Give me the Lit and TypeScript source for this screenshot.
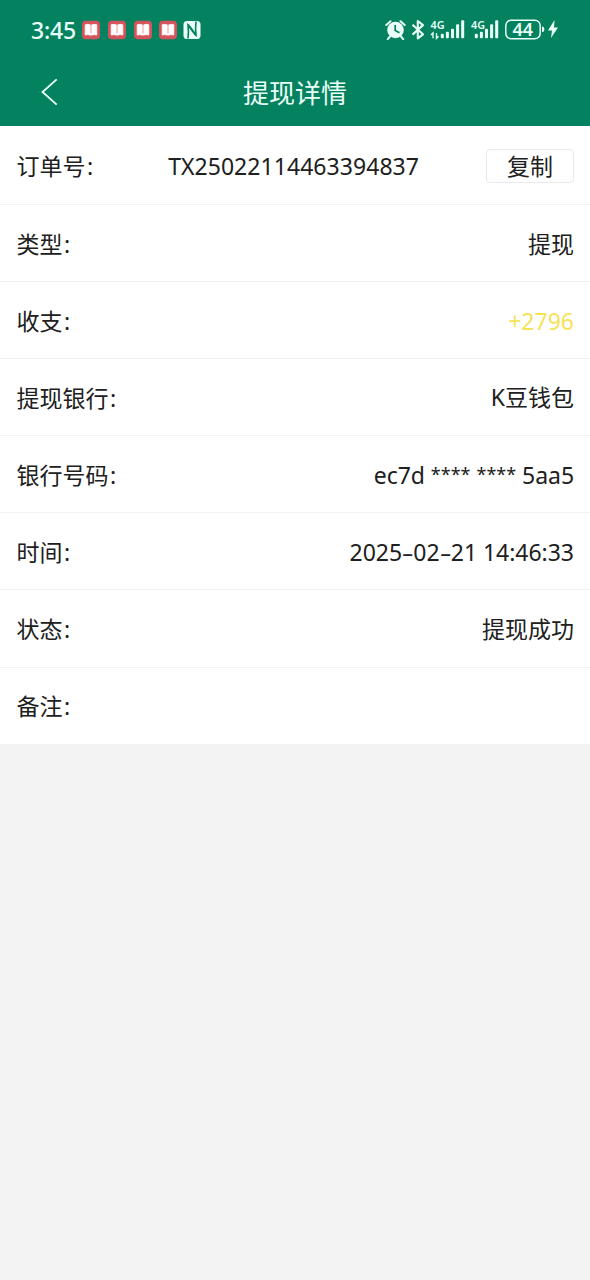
import { LitElement, html, svg, css } from "lit";
import { customElement, property } from "lit/decorators.js";

const book = html`<svg class="book" width="20" height="20" viewBox="0 0 20 20">
  <rect x="1" y="0.8" width="18" height="18.4" rx="4" fill="#d5545c" />
  <path d="M4.2 4.8Q7 3.7 9.6 5V15.2Q7 14.1 4.2 15ZM10.4 5Q13 3.7 15.8 4.8V15Q13 14.1 10.4 15.2Z" fill="#fff" stroke="#fff" stroke-width=".8" stroke-linejoin="round" />
  <path d="M10 5V13" stroke="#eda0a5" stroke-width=".8" />
</svg>`;

@customElement("status-bar")
class StatusBar extends LitElement {
  static styles = css`
    :host { display: flex; height: 58px; align-items: center; color: #e9fff7; padding: 1px 31px 0; box-sizing: border-box; font-family: "Noto Sans", sans-serif; }
    svg { display: block; flex: none; }
    .time { width: 50.4px; font-size: 23px; font-weight: 500; letter-spacing: -0.2px; line-height: 30px; white-space: nowrap; }
    .books { display: flex; gap: 5.7px; }
    .nfc { margin-left: 4.5px; }
    .right { margin-left: auto; }
    .net { font: 600 11px "Noto Sans", sans-serif; }
    .level { font: 600 17px "Noto Sans", sans-serif; }
  `;

  private bars(x: number) {
    return [0, 1, 2, 3, 4].map((i) => {
      const h = [4.5, 6.5, 9.5, 14, 18][i];
      return svg`<rect x=${x + i * 5.1} y=${38.3 - h} width="3" height=${h} rx="1" />`;
    });
  }

  render() {
    return html`
      <div class="time">3:45</div>
      <div class="books">${book}${book}${book}${book}</div>
      <svg class="nfc" width="18" height="20" viewBox="0 0 18 20">
        <rect x="0.5" y="1" width="17" height="18" rx="3.5" fill="#e9fff7" />
        <path d="M5 18.5Q5.8 12 5 5.2L12.8 15.4M13 1.5Q12.2 8 13 14.8L5.2 4.6" fill="none" stroke="#048260" stroke-width="1.6" />
      </svg>
      <svg class="right" width="174" height="40" viewBox="385 10 174 40" fill="#e9fff7">
        <g transform="translate(0 -0.5)">
          <circle cx="395.5" cy="30.5" r="8.3" />
          <path d="M386.3 25.5L390.5 21.7M404.7 25.5L400.5 21.7M390 37L387.8 39.6M401 37L403.2 39.6" stroke="#e9fff7" stroke-width="2" stroke-linecap="round" />
          <path d="M395.2 25.5V31L399.5 33.2" stroke="#048260" stroke-width="1.7" fill="none" />
        </g>
        <path d="M412.5 24.8L423 34.3L417.8 38.3V21L423 25.1L412.5 34.6" stroke="#e9fff7" stroke-width="2.1" fill="none" stroke-linejoin="round" />
        <text class="net" x="430.5" y="28.5" textLength="14" lengthAdjust="spacingAndGlyphs">4G</text>
        <path d="M431 35L433 33V38.3M438.5 36.3L436.5 38.3V33" stroke="#e9fff7" stroke-width="1.4" fill="none" />
        <g>${this.bars(440.8)}</g>
        <text class="net" x="471" y="28.5" textLength="14" lengthAdjust="spacingAndGlyphs">4G</text>
        <g>${this.bars(474.8)}</g>
        <rect x="505.8" y="20.2" width="34.4" height="18.6" rx="5.5" fill="none" stroke="#e9fff7" stroke-width="1.5" />
        <text class="level" x="512.5" y="35.9" textLength="20.5" lengthAdjust="spacingAndGlyphs">44</text>
        <path d="M542 26.5Q544.3 26.5 544.3 29.2Q544.3 32 542 32Z" />
        <path d="M554.5 20L548 30.5H552L551 38L558 27.5H554Z" />
      </svg>
    `;
  }
}

@customElement("detail-row")
class DetailRow extends LitElement {
  @property() label = "";
  @property() value = "";
  @property() tone = "";
  @property({ type: Boolean }) copy = false;

  static styles = css`
    :host { display: flex; align-items: center; justify-content: space-between; height: 77.1px; padding: 0 16px 0 16.5px; box-sizing: border-box; border-bottom: 1.5px solid #f2f2f2; background: #fff; color: #202020; font: 23px/34px "Noto Sans", "Noto Sans CJK SC", sans-serif; white-space: nowrap; }
    :host([copy]) { height: 79px; padding-top: 2px; }
    :host([last]) { border-bottom: 0; height: 76px; }
    .label, .cjk { font-family: "Noto Sans CJK SC", sans-serif; }
    .cjk { padding-bottom: 1px; }
    :host([copy]) .label { padding-bottom: 2px; }
    .colon { font-family: "Noto Sans", sans-serif; margin-left: 1.5px; }
    .order { letter-spacing: 0.05px; padding-left: 8px; }
    .account { letter-spacing: -0.05px; }
    .account, .date, .amount { padding-top: 1px; }
    .star { display: inline-block; font-size: 18px; letter-spacing: 0; line-height: 1; transform: translateY(-3px); }
    .dash { display: inline-block; width: 11.2px; text-align: center; transform: scaleX(1.6); letter-spacing: 0; }
    .date { letter-spacing: -0.03px; }
    .amount { color: #f6e258; }
    .button { width: 88px; height: 34px; box-sizing: border-box; border: 1px solid #e9e9e9; border-radius: 4px; background: #fff; color: #202020; padding: 0 0 2px; font: 23px/30px "Noto Sans CJK SC", sans-serif; }
  `;

  private parts() {
    return this.value.split(/(\*+|-)/).map((p) =>
      p === "-" ? html`<span class="dash">-</span>` : p[0] === "*" ? html`<span class="star">${p}</span>` : p
    );
  }

  render() {
    return html`
      <span class="label">${this.label}<span class="colon">:</span></span>
      <span class="value ${this.tone}">${this.parts()}</span>
      ${this.copy ? html`<button class="button">复制</button>` : ""}
    `;
  }
}

@customElement("app-root")
class AppRoot extends LitElement {
  static styles = css`
    :host { display: block; min-height: 1280px; background: #f3f3f3; }
    .top { background: #048260; height: 126px; }
    .nav { display: grid; grid-template-columns: 100px 1fr 100px; align-items: center; height: 68px; }
    .back { display: block; margin-left: 40px; }
    .title { margin: 0; padding-bottom: 1px; text-align: center; color: #e9fff7; font: 400 26px/36px "Noto Sans CJK SC", sans-serif; }
  `;

  render() {
    return html`
      <header class="top">
        <status-bar></status-bar>
        <nav class="nav">
          <svg class="back" width="20" height="28" viewBox="0 0 20 28"><path d="M16.7 1.3L2.5 14L16.7 26.7" fill="none" stroke="#e9fff7" stroke-width="1.8" /></svg>
          <h1 class="title">提现详情</h1>
        </nav>
      </header>
      <main>
        <detail-row label="订单号" value="TX25022114463394837" tone="order" copy></detail-row>
        <detail-row label="类型" value="提现" tone="cjk"></detail-row>
        <detail-row label="收支" value="+2796" tone="amount"></detail-row>
        <detail-row label="提现银行" value="K豆钱包"></detail-row>
        <detail-row label="银行号码" value="ec7d **** **** 5aa5" tone="account"></detail-row>
        <detail-row label="时间" value="2025-02-21 14:46:33" tone="date"></detail-row>
        <detail-row label="状态" value="提现成功" tone="cjk"></detail-row>
        <detail-row label="备注" last></detail-row>
      </main>
    `;
  }
}
